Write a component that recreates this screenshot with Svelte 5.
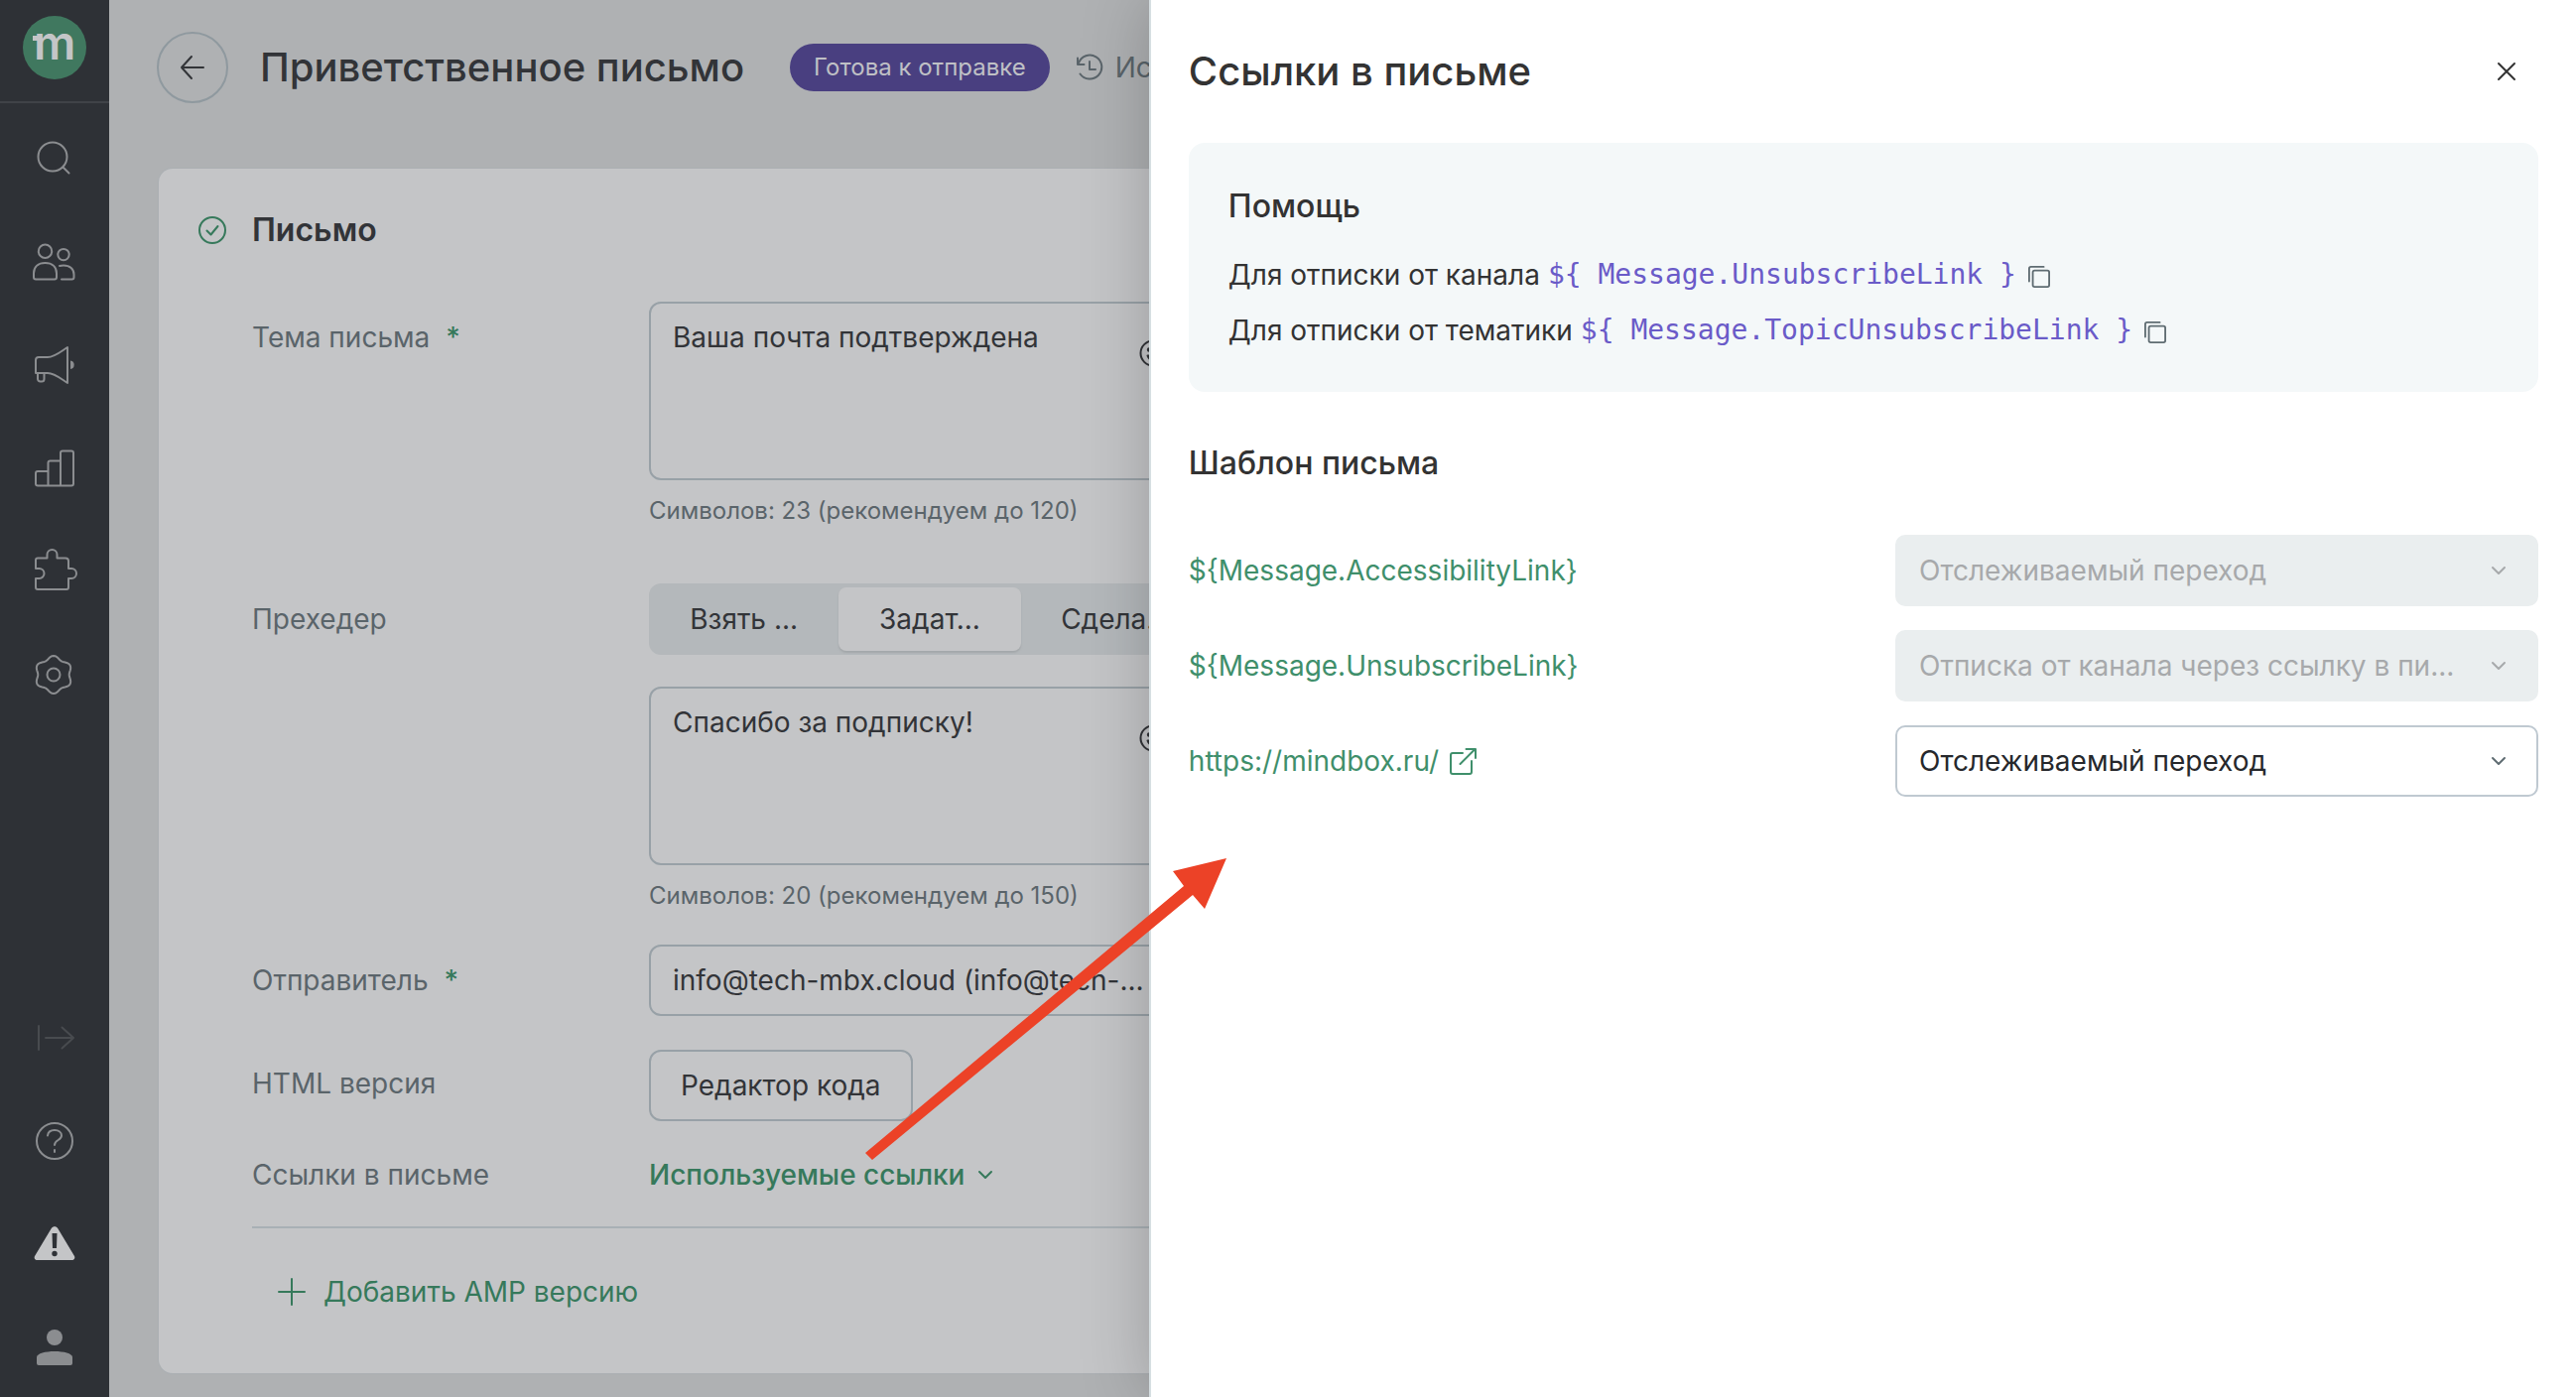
<script>
  const gearPath =
    Array.from({ length: 72 }, (_, i) => {
      const a = (i * Math.PI) / 36;
      const r = 17.4 + 1.7 * Math.cos(6 * a);
      const x = (23 + r * Math.sin(a)).toFixed(2);
      const y = (24 - r * Math.cos(a)).toFixed(2);
      return `${i ? 'L' : 'M'}${x} ${y}`;
    }).join('') + 'Z';

  const preheaderModes = ['Взять ...', 'Задат...', 'Сдела...'];
  let activeMode = $state(1);

  let subject = $state('Ваша почта подтверждена');
  let preheader = $state('Спасибо за подписку!');

  const snippets = [
    { text: 'Для отписки от канала', code: '${ Message.UnsubscribeLink }' },
    { text: 'Для отписки от тематики', code: '${ Message.TopicUnsubscribeLink }' },
  ];

  const links = [
    { id: 'l1', name: '${Message.AccessibilityLink}', action: 'Отслеживаемый переход', disabled: true, external: false },
    { id: 'l2', name: '${Message.UnsubscribeLink}', action: 'Отписка от канала через ссылку в пи...', disabled: true, external: false },
    { id: 'l3', name: 'https://mindbox.ru/', action: 'Отслеживаемый переход', disabled: false, external: true },
  ];
</script>

{#snippet chevron()}
  <svg class="chevron" viewBox="0 0 16 16" aria-hidden="true"><path d="M2 5l6 6 6-6" /></svg>
{/snippet}

{#snippet smiley()}
  <button class="emoji" type="button" aria-label="Эмодзи">
    <svg viewBox="0 0 28 28"><circle cx="14" cy="14" r="12.5" /><path d="M8.5 16.5c1 3 3 4.200 5.500 4.200s4.500-1.200 5.500-4.200z" /><circle class="dot" cx="10" cy="10.500" r="1.200" /><circle class="dot" cx="18" cy="10.500" r="1.200" /></svg>
  </button>
{/snippet}

<div class="app">
  <aside class="sidebar">
    <a class="logo" href="#home" aria-label="Главная">
      <svg viewBox="0 0 64 64">
        <circle cx="32" cy="32" r="32" />
        <rect x="10" y="20" width="7" height="5" />
        <text x="11" y="44">m</text>
      </svg>
    </a>
    <nav class="nav top">
      <button type="button" aria-label="Поиск">
        <svg viewBox="0 0 48 48"><circle cx="22" cy="22" r="14.500" /><path d="M32.500 32.500l6 6" /></svg>
      </button>
      <button type="button" aria-label="Клиенты">
        <svg viewBox="0 0 48 48"><circle cx="14.500" cy="13.300" r="6.700" /><circle cx="33" cy="16.600" r="5.700" /><path d="M3 35.500C3 29 7.500 25 14.500 25S26 29 26 35.500V39.500a2 2 0 0 1-2 2H5a2 2 0 0 1-2-2z" /><path d="M29 28c1.200-.4 2.500-.5 4-.5 6.500 0 10.500 3.800 10.500 9V39.500a2 2 0 0 1-2 2H31" /></svg>
      </button>
      <button type="button" aria-label="Кампании">
        <svg viewBox="0 0 48 48"><path d="M5 19a3 3 0 0 1 3-3h9c7 0 13-5.500 20-10V42c-7-4.500-13-10-20-10H5z" /><path d="M7 32.500V38a2.500 2.500 0 0 0 2.500 2.500h1.500a2.500 2.500 0 0 0 2.500-2.500v-5.500" /><path class="fill" d="M40 19.500a4.300 4.300 0 0 1 0 8.500z" /></svg>
      </button>
      <button type="button" aria-label="Отчёты">
        <svg viewBox="0 0 48 48"><path d="M17.500 41.500H7a2 2 0 0 1-2-2V29a2 2 0 0 1 2-2h10.500zM17.500 41.500V18.500a2 2 0 0 1 2-2H30v25zM30 41.500V8.500a2 2 0 0 1 2-2h9a2 2 0 0 1 2 2v31a2 2 0 0 1-2 2H17.500" /></svg>
      </button>
      <button type="button" aria-label="Интеграции">
        <svg viewBox="0 0 48 48"><path d="M7 10.500h9.500V7a5 5 0 0 1 10 0v3.500H35a3 3 0 0 1 3 3V21h3a5 5 0 0 1 0 10h-3v9a2 2 0 0 1-2 2H7a2 2 0 0 1-2-2v-9h3.500a5 5 0 0 0 0-10H5v-8.500a2 2 0 0 1 2-2z" /></svg>
      </button>
      <button type="button" aria-label="Настройки">
        <svg viewBox="0 0 48 48"><path d={gearPath} /><circle cx="23" cy="24" r="6.500" /></svg>
      </button>
    </nav>
    <nav class="nav bottom">
      <button class="faded" type="button" aria-label="Развернуть меню">
        <svg viewBox="0 0 48 48"><path d="M8 12v24M15 24h28M31.500 13.500L43 24 31.500 34.500" /></svg>
      </button>
      <button type="button" aria-label="Помощь">
        <svg viewBox="0 0 48 48"><circle cx="24" cy="24" r="18" /><path d="M17 18.500c.5-4 3.500-5.500 7-5.500 4 0 7 2 7 5.500 0 5-7 4-7 9.500" /><path d="M24 33v2" /></svg>
      </button>
      <button class="warn" type="button" aria-label="Предупреждения">
        <svg viewBox="0 0 48 48"><path class="shape" d="M20.800 8c1.500-2.500 5-2.500 6.400 0L44 36c1 2-.3 4-2.500 4h-35C4.300 40 3 38 4 36z" /><path class="mark" d="M21.500 13h5L26 28h-4z" /><circle class="mark" cx="24" cy="33.500" r="2.700" /></svg>
      </button>
      <button type="button" aria-label="Профиль">
        <svg viewBox="0 0 48 48"><circle class="fill" cx="24" cy="14" r="8" /><path class="fill" d="M6 34c0-4 9-6 18-6s18 2 18 6v6a2 2 0 0 1-2 2H8a2 2 0 0 1-2-2z" /></svg>
      </button>
    </nav>
  </aside>

  <main class="page">
    <header class="head">
      <button class="back" type="button" aria-label="Назад">
        <svg viewBox="0 0 28 28"><path d="M25 14H3M13 3L3 14l10 11" /></svg>
      </button>
      <h1>Приветственное письмо</h1>
      <span class="status">Готова к отправке</span>
      <a class="history" href="#history">
        <svg viewBox="0 0 28 28"><path d="M4.500 20.500A12 12 0 1 0 3 9.500M2 4.500v6.500h6.500M14 8v8h6" /></svg>
        <span>История</span>
      </a>
    </header>

    <section class="card">
      <div class="card-title">
        <svg viewBox="0 0 28 28"><circle cx="14" cy="14" r="13" /><path d="M8.500 14.500l4 4 7-8.500" /></svg>
        <h2>Письмо</h2>
      </div>

      <div class="form">
        <div class="row">
          <label class="label" for="subject">Тема письма <b>*</b></label>
          <div class="control">
            <div class="area">
              <textarea id="subject" bind:value={subject}></textarea>
              {@render smiley()}
            </div>
            <p class="counter">Символов: {subject.length} (рекомендуем до 120)</p>
          </div>
        </div>

        <div class="row preheader">
          <label class="label" for="preheader">Прехедер</label>
          <div class="control">
            <div class="segments">
              {#each preheaderModes as mode, i}
                <button type="button" class:active={activeMode === i} onclick={() => (activeMode = i)}>{mode}</button>
              {/each}
            </div>
            <div class="area">
              <textarea id="preheader" bind:value={preheader}></textarea>
              {@render smiley()}
            </div>
            <p class="counter">Символов: {preheader.length} (рекомендуем до 150)</p>
          </div>
        </div>

        <div class="row">
          <label class="label" for="sender">Отправитель <b>*</b></label>
          <div class="control">
            <select id="sender" class="select"><option>info@tech-mbx.cloud (info@tech-...</option></select>
          </div>
        </div>

        <div class="row">
          <span class="label raised">HTML версия</span>
          <div class="control"><button class="outline" type="button">Редактор кода</button></div>
        </div>

        <div class="row">
          <span class="label flush">Ссылки в письме</span>
          <div class="control">
            <button class="used" type="button">Используемые ссылки {@render chevron()}</button>
          </div>
        </div>
      </div>

      <hr />
      <button class="amp" type="button">
        <svg viewBox="0 0 28 28"><path d="M14 1v26M1 14h26" /></svg>
        Добавить AMP версию
      </button>
    </section>
  </main>

  <div class="drawer" role="dialog" aria-labelledby="drawer-title">
    <header class="drawer-head">
      <h2 id="drawer-title">Ссылки в письме</h2>
      <button type="button" aria-label="Закрыть">
        <svg viewBox="0 0 20 20"><path d="M2 2l16 16M18 2L2 18" /></svg>
      </button>
    </header>

    <section class="help">
      <h3>Помощь</h3>
      {#each snippets as s}
        <p>
          {s.text} <code>{s.code}</code>
          <button type="button" aria-label="Копировать">
            <svg viewBox="0 0 24 24"><path d="M1 17V3a2 2 0 0 1 2-2h14" /><rect x="5" y="5" width="18" height="18" rx="2" /></svg>
          </button>
        </p>
      {/each}
    </section>

    <h3 class="template">Шаблон письма</h3>
    <div class="links">
      {#each links as l}
        <div class="link-row">
          <a href="#{l.id}">
            {l.name}
            {#if l.external}
              <svg viewBox="0 0 28 28"><path d="M14 6H4a2 2 0 0 0-2 2v17a2 2 0 0 0 2 2h17a2 2 0 0 0 2-2V14M11.500 17L26.500 2M17.500 2h9.500v9" /></svg>
            {/if}
          </a>
          <div class="pick">
            <select aria-label={l.name} disabled={l.disabled}><option>{l.action}</option></select>
            {@render chevron()}
          </div>
        </div>
      {/each}
    </div>
  </div>

  <svg class="pointer" viewBox="0 0 364 304" aria-hidden="true">
    <path d="M0 297L321 28 310 13 364 0 342 51 330 37 7 304z" />
  </svg>
</div>

<style>
  :global(body) {
    margin: 0;
  }
  .app {
    position: relative;
    display: flex;
    min-height: 100vh;
    overflow: hidden;
    background: #afb1b3;
    color: #323438;
    font: 400 28px/40px Inter, 'Liberation Sans', sans-serif;
  }
  h1, h2, h3, p {
    margin: 0;
    font-weight: 500;
  }
  button, select, textarea {
    box-sizing: border-box;
    margin: 0;
    padding: 0;
    border: 0;
    background: none;
    color: inherit;
    font: inherit;
  }
  select {
    appearance: none;
    opacity: 1;
  }
  a {
    text-decoration: none;
  }
  svg {
    display: block;
    flex: none;
    fill: none;
    stroke: currentColor;
    stroke-width: 2px;
    stroke-linecap: round;
    stroke-linejoin: round;
  }

  /* Sidebar */
  .sidebar {
    display: flex;
    flex: none;
    flex-direction: column;
    width: 110px;
    background: #2e3136;
    color: #8b8d90;
  }
  .logo {
    display: flex;
    box-sizing: border-box;
    justify-content: center;
    height: 104px;
    padding-top: 16px;
    border-bottom: 2px solid #404348;
  }
  .logo svg {
    width: 64px;
    height: 64px;
    stroke: none;
    fill: #c4c5c7;
  }
  .logo circle {
    fill: #40785f;
  }
  .logo text {
    font-size: 47px;
    font-weight: 600;
  }
  .nav {
    display: flex;
    flex-direction: column;
    align-items: center;
    gap: 56px;
  }
  .nav svg {
    width: 48px;
    height: 48px;
  }
  .top {
    padding-top: 32px;
  }
  .bottom {
    margin-top: auto;
    padding-bottom: 26px;
  }
  .fill {
    fill: currentColor;
    stroke: none;
  }
  .faded {
    color: #484b4f;
  }
  .shape {
    fill: #c4c5c7;
    stroke: none;
  }
  .mark {
    fill: #2e3136;
    stroke: none;
  }

  /* Page */
  .page {
    flex: 1;
    min-width: 0;
    padding: 32px 48px 24px;
  }
  /* The header ends where the drawer begins */
  .head {
    display: flex;
    align-items: center;
    height: 72px;
    margin-right: calc(55.4vw - 48px);
    overflow: hidden;
    white-space: nowrap;
  }
  .back {
    display: grid;
    flex: none;
    place-items: center;
    width: 72px;
    height: 72px;
    border: 2px solid #8f999f;
    border-radius: 50%;
  }
  .back svg {
    width: 28px;
    height: 28px;
  }
  h1 {
    flex: none;
    margin-left: 32px;
    font-size: 40px;
    line-height: 48px;
  }
  .status {
    flex: none;
    margin-left: 46px;
    padding: 8px 24px;
    border-radius: 24px;
    background: #493f80;
    color: #bfc0c5;
    font-size: 24px;
    line-height: 32px;
  }
  .history {
    display: flex;
    flex: 1;
    align-items: center;
    gap: 12px;
    min-width: 0;
    margin-left: 26px;
    color: #5a646a;
  }
  .history span {
    min-width: 0;
    overflow: hidden;
  }
  .history svg {
    width: 28px;
    height: 28px;
  }
  .card {
    margin: 66px 0 0 2px;
    padding: 42px 40px 62px;
    border-radius: 14px;
    background: #c4c5c7;
    box-shadow: 0 0 2px #a3adb3;
  }
  .card-title {
    display: flex;
    align-items: center;
    gap: 26px;
  }
  .card-title svg {
    width: 28px;
    height: 28px;
    color: #36795b;
  }
  .card-title h2 {
    font-size: 32px;
    font-weight: 600;
    line-height: 40px;
  }
  .form {
    display: flex;
    flex-direction: column;
    gap: 34px;
    margin: 52px 0 0 54px;
  }
  .row {
    display: flex;
    align-items: flex-start;
  }
  .preheader {
    margin-top: 24px;
  }
  .label {
    flex: none;
    width: 400px;
    padding-top: 16px;
    color: #5a646a;
  }
  .raised {
    padding-top: 14px;
  }
  .flush {
    padding-top: 0;
  }
  .label b {
    margin-left: 8px;
    color: #36795b;
    font-weight: 500;
  }
  .control {
    width: 566px;
  }
  .area {
    display: flex;
    box-sizing: border-box;
    height: 180px;
    padding: 14px 42px 14px 22px;
    border: 2px solid #98a1a7;
    border-radius: 12px;
  }
  .area textarea {
    flex: 1;
    min-width: 0;
    resize: none;
    outline: none;
  }
  .emoji {
    align-self: flex-start;
    margin-top: 22px;
  }
  .emoji svg {
    width: 28px;
    height: 28px;
  }
  .emoji .dot {
    fill: currentColor;
  }
  .counter {
    margin-top: 16px;
    color: #5a646a;
    font-size: 24px;
    font-weight: 400;
    line-height: 30px;
  }
  .segments {
    display: flex;
    box-sizing: border-box;
    gap: 4px;
    height: 72px;
    margin-bottom: 32px;
    padding: 4px;
    border-radius: 12px;
    background: #b4b8bb;
  }
  .segments button {
    flex: 1;
    border-radius: 8px;
  }
  .segments .active {
    background: #c4c5c7;
    box-shadow: 0 2px 2px #a3a7aa;
  }
  .select {
    width: 100%;
    height: 72px;
    padding: 0 22px;
    border: 2px solid #98a1a7;
    border-radius: 12px;
  }
  .outline {
    display: block;
    height: 72px;
    padding: 0 30px;
    border: 2px solid #98a1a7;
    border-radius: 12px;
  }
  .used, .amp {
    display: flex;
    align-items: center;
    color: #36795b;
    font-weight: 500;
  }
  .used {
    gap: 13px;
  }
  .chevron {
    width: 16px;
    height: 16px;
  }
  hr {
    height: 2px;
    margin: 32px 0 44px 54px;
    border: 0;
    background: #a8b0b5;
  }
  .amp {
    gap: 18px;
    margin-left: 80px;
    font-weight: 400;
  }
  .amp svg {
    width: 28px;
    height: 28px;
  }

  /* Drawer */
  .drawer {
    position: absolute;
    inset: 0 0 0 auto;
    box-sizing: border-box;
    width: 55.4%;
    padding: 48px 38px 0;
    border-left: 2px solid #d6dfe2;
    background: #fff;
    box-shadow: 0 0 64px rgb(0 0 0 / 22%);
    color: #333;
  }
  .drawer-head {
    display: flex;
    align-items: center;
    justify-content: space-between;
    padding-right: 22px;
  }
  .drawer-head h2 {
    font-size: 40px;
    line-height: 48px;
  }
  .drawer-head svg {
    width: 20px;
    height: 20px;
  }
  .help {
    margin-top: 48px;
    padding: 42px 40px 34px;
    border-radius: 16px;
    background: #f4f8f9;
  }
  h3 {
    font-size: 32px;
    line-height: 44px;
  }
  .help h3 {
    margin-bottom: 19px;
  }
  .help p {
    display: flex;
    align-items: center;
    gap: 8px;
    height: 56px;
    font-weight: 400;
  }
  .help code {
    color: #6a5bc8;
    font: 28px/40px 'DejaVu Sans Mono', monospace;
    white-space: pre;
  }
  .help button {
    margin-left: 4px;
    padding-top: 4px;
    color: #5f6c72;
  }
  .help p svg {
    width: 22px;
    height: 22px;
  }
  .template {
    margin-top: 50px;
  }
  .links {
    display: flex;
    flex-direction: column;
    gap: 24px;
    margin-top: 50px;
  }
  .link-row {
    display: flex;
    align-items: center;
    justify-content: space-between;
  }
  .link-row a {
    display: flex;
    align-items: center;
    gap: 10px;
    color: #3f8f6b;
  }
  .link-row a svg {
    width: 28px;
    height: 28px;
  }
  .pick {
    display: grid;
    align-items: center;
    width: 648px;
    color: #5f6c72;
  }
  .pick > :global(*) {
    grid-area: 1 / 1;
  }
  .pick select {
    width: 100%;
    height: 72px;
    padding: 0 22px;
    border: 2px solid #bfc9d1;
    border-radius: 10px;
    background: #fff;
    color: #26282c;
  }
  .pick select:disabled {
    border-color: #eaeeef;
    background: #eaeeef;
    color: #a7a9ab;
  }
  .pick .chevron {
    justify-self: end;
    margin-right: 32px;
    pointer-events: none;
  }
  .pick select:disabled + .chevron {
    color: #a7a9ab;
  }

  /* Annotation arrow laid over the page */
  .pointer {
    position: absolute;
    top: 865px;
    left: 872px;
    width: 364px;
    height: 304px;
    fill: #ec4227;
    stroke: none;
    pointer-events: none;
  }
</style>
